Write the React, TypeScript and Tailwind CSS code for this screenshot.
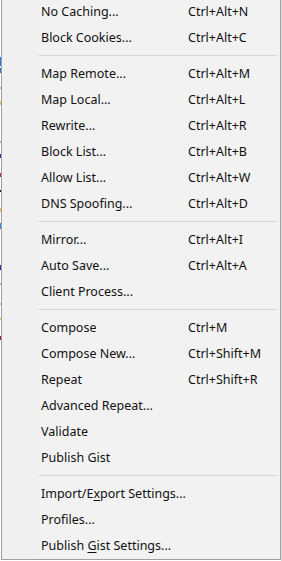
import React from 'react';

type Item = { label: React.ReactNode; shortcut?: string } | 'sep';

const u = (c: string) => <span className="underline underline-offset-2">{c}</span>;

const ITEMS: Item[] = [
  { label: 'No Caching...', shortcut: 'Ctrl+Alt+N' },
  { label: 'Block Cookies...', shortcut: 'Ctrl+Alt+C' },
  'sep',
  { label: 'Map Remote...', shortcut: 'Ctrl+Alt+M' },
  { label: 'Map Local...', shortcut: 'Ctrl+Alt+L' },
  { label: 'Rewrite...', shortcut: 'Ctrl+Alt+R' },
  { label: 'Block List...', shortcut: 'Ctrl+Alt+B' },
  { label: 'Allow List...', shortcut: 'Ctrl+Alt+W' },
  { label: 'DNS Spoofing...', shortcut: 'Ctrl+Alt+D' },
  'sep',
  { label: 'Mirror...', shortcut: 'Ctrl+Alt+I' },
  { label: 'Auto Save...', shortcut: 'Ctrl+Alt+A' },
  { label: 'Client Process...' },
  'sep',
  { label: 'Compose', shortcut: 'Ctrl+M' },
  { label: 'Compose New...', shortcut: 'Ctrl+Shift+M' },
  { label: 'Repeat', shortcut: 'Ctrl+Shift+R' },
  { label: 'Advanced Repeat...' },
  { label: 'Validate' },
  { label: 'Publish Gist' },
  'sep',
  { label: <>Import/E{u('x')}port Settings...</> },
  { label: 'Profiles...' },
  { label: <>Publish {u('G')}ist Settings...</> },
];

// bits of the window behind the menu, peeking out at x=0
const EDGE = [
  { top: 57, h: 9, c: '#1e7be0' },
  { top: 68, h: 5, c: '#1e7be0' },
  { top: 87, h: 2, c: '#7cc3f0' },
  { top: 101, h: 4, c: '#f0b860' },
  { top: 141, h: 2, c: '#7cc3f0' },
  { top: 154, h: 4, c: '#3a2a8a' },
  { top: 173, h: 4, c: '#b03030' },
  { top: 190, h: 2, c: '#202020' },
  { top: 208, h: 4, c: '#f0b860' },
  { top: 223, h: 6, c: '#3a8ae0' },
  { top: 265, h: 5, c: '#1e3aa0' },
  { top: 283, h: 2, c: '#7cc3f0' },
  { top: 303, h: 2, c: '#f0b860' },
  { top: 318, h: 2, c: '#f0b860' },
  { top: 336, h: 4, c: '#a02040' },
];

export default function App() {
  return (
    <div className="flex h-[561px] w-[282px] overflow-hidden bg-white" style={{ fontFamily: '"Noto Sans", sans-serif' }}>
      <div className="relative w-px shrink-0 bg-white">
        {EDGE.map((e, i) => (
          <div key={i} className="absolute left-0 w-px" style={{ top: e.top, height: e.h, background: e.c }} />
        ))}
      </div>
      <div className="mt-[-1px] flex h-[561px] w-[280px] shrink-0 border-b border-l border-r border-[#a0a0a0] bg-[#f2f2f2]">
        <div className="w-[36px] shrink-0 bg-[#f0f0f0]" />
        <div className="flex-1">
          {ITEMS.map((it, i) =>
            it === 'sep' ? (
              <div key={i} className="h-[10px] pt-[4px] pr-[3px]">
                <div className="h-px bg-[#d7d7d7]" />
              </div>
            ) : (
              <div key={i} className="flex h-[26px] items-center text-[12.5px] text-[#111]">
                <div className="w-[150px] shrink-0 pl-[3px] whitespace-nowrap">{it.label}</div>
                <div className="whitespace-nowrap">{it.shortcut}</div>
              </div>
            )
          )}
        </div>
      </div>
      <div className="w-px shrink-0 bg-[#d8d8d8]" />
    </div>
  );
}
